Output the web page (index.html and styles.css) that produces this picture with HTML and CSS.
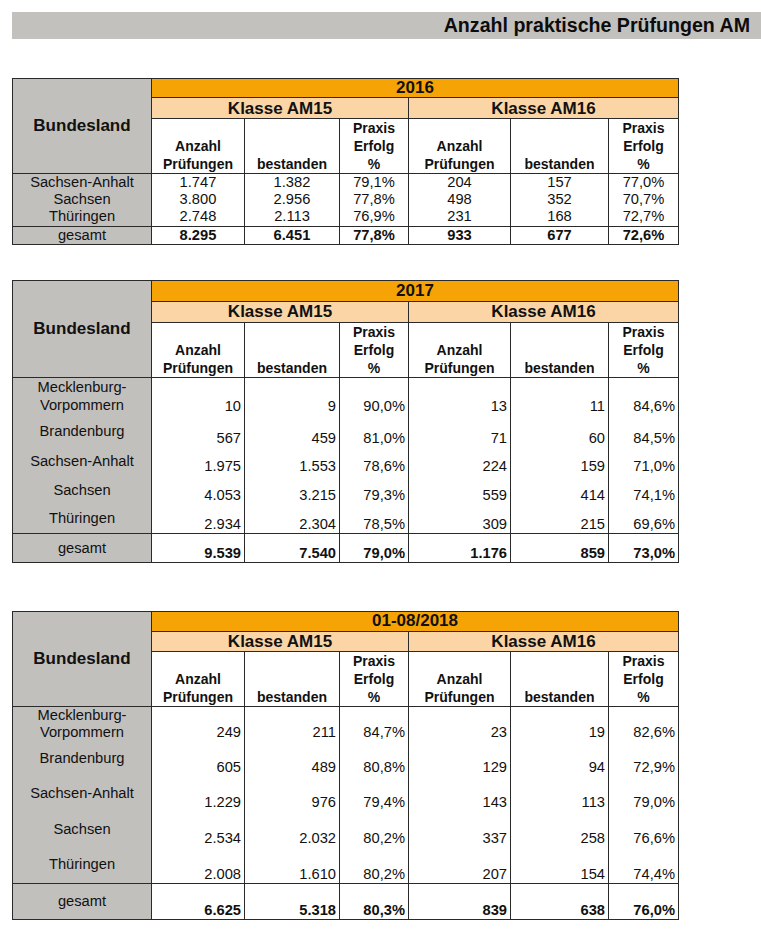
FILE: index.html
```html
<!DOCTYPE html>
<html lang="de">
<head>
<meta charset="utf-8">
<title>Anzahl praktische Prüfungen AM</title>
<link rel="stylesheet" href="styles.css">
</head>
<body>
<div class="title-bar">Anzahl praktische Prüfungen AM</div>

<table class="stats t1">
  <colgroup>
    <col class="c-land"><col class="c-a15"><col class="c-b15"><col class="c-p15"><col class="c-a16"><col class="c-b16"><col class="c-p16">
  </colgroup>
  <tr class="r-year">
    <th class="land-head" rowspan="3">Bundesland</th>
    <th class="year" colspan="6">2016</th>
  </tr>
  <tr class="r-klasse">
    <th class="klasse" colspan="3">Klasse AM15</th>
    <th class="klasse" colspan="3">Klasse AM16</th>
  </tr>
  <tr class="r-head">
    <th class="col-head">Anzahl<br>Prüfungen</th>
    <th class="col-head">bestanden</th>
    <th class="col-head">Praxis<br>Erfolg<br>%</th>
    <th class="col-head">Anzahl<br>Prüfungen</th>
    <th class="col-head">bestanden</th>
    <th class="col-head">Praxis<br>Erfolg<br>%</th>
  </tr>
  <tr class="r-d1">
    <td class="land">Sachsen-Anhalt</td><td>1.747</td><td>1.382</td><td>79,1%</td><td>204</td><td>157</td><td>77,0%</td>
  </tr>
  <tr class="r-d2">
    <td class="land">Sachsen</td><td>3.800</td><td>2.956</td><td>77,8%</td><td>498</td><td>352</td><td>70,7%</td>
  </tr>
  <tr class="r-d3">
    <td class="land">Thüringen</td><td>2.748</td><td>2.113</td><td>76,9%</td><td>231</td><td>168</td><td>72,7%</td>
  </tr>
  <tr class="total">
    <td class="land">gesamt</td><td>8.295</td><td>6.451</td><td>77,8%</td><td>933</td><td>677</td><td>72,6%</td>
  </tr>
</table>

<table class="stats t2 wide">
  <colgroup>
    <col class="c-land"><col class="c-a15"><col class="c-b15"><col class="c-p15"><col class="c-a16"><col class="c-b16"><col class="c-p16">
  </colgroup>
  <tr class="r-year">
    <th class="land-head" rowspan="3">Bundesland</th>
    <th class="year" colspan="6">2017</th>
  </tr>
  <tr class="r-klasse">
    <th class="klasse" colspan="3">Klasse AM15</th>
    <th class="klasse" colspan="3">Klasse AM16</th>
  </tr>
  <tr class="r-head">
    <th class="col-head">Anzahl<br>Prüfungen</th>
    <th class="col-head">bestanden</th>
    <th class="col-head">Praxis<br>Erfolg<br>%</th>
    <th class="col-head">Anzahl<br>Prüfungen</th>
    <th class="col-head">bestanden</th>
    <th class="col-head">Praxis<br>Erfolg<br>%</th>
  </tr>
  <tr class="r-d1">
    <td class="land">Mecklenburg-<br>Vorpommern</td><td>10</td><td>9</td><td>90,0%</td><td>13</td><td>11</td><td>84,6%</td>
  </tr>
  <tr class="r-d2">
    <td class="land">Brandenburg</td><td>567</td><td>459</td><td>81,0%</td><td>71</td><td>60</td><td>84,5%</td>
  </tr>
  <tr class="r-d3">
    <td class="land">Sachsen-Anhalt</td><td>1.975</td><td>1.553</td><td>78,6%</td><td>224</td><td>159</td><td>71,0%</td>
  </tr>
  <tr class="r-d4">
    <td class="land">Sachsen</td><td>4.053</td><td>3.215</td><td>79,3%</td><td>559</td><td>414</td><td>74,1%</td>
  </tr>
  <tr class="r-d5">
    <td class="land">Thüringen</td><td>2.934</td><td>2.304</td><td>78,5%</td><td>309</td><td>215</td><td>69,6%</td>
  </tr>
  <tr class="total">
    <td class="land">gesamt</td><td>9.539</td><td>7.540</td><td>79,0%</td><td>1.176</td><td>859</td><td>73,0%</td>
  </tr>
</table>

<table class="stats t3 wide">
  <colgroup>
    <col class="c-land"><col class="c-a15"><col class="c-b15"><col class="c-p15"><col class="c-a16"><col class="c-b16"><col class="c-p16">
  </colgroup>
  <tr class="r-year">
    <th class="land-head" rowspan="3">Bundesland</th>
    <th class="year" colspan="6">01-08/2018</th>
  </tr>
  <tr class="r-klasse">
    <th class="klasse" colspan="3">Klasse AM15</th>
    <th class="klasse" colspan="3">Klasse AM16</th>
  </tr>
  <tr class="r-head">
    <th class="col-head">Anzahl<br>Prüfungen</th>
    <th class="col-head">bestanden</th>
    <th class="col-head">Praxis<br>Erfolg<br>%</th>
    <th class="col-head">Anzahl<br>Prüfungen</th>
    <th class="col-head">bestanden</th>
    <th class="col-head">Praxis<br>Erfolg<br>%</th>
  </tr>
  <tr class="r-d1">
    <td class="land">Mecklenburg-<br>Vorpommern</td><td>249</td><td>211</td><td>84,7%</td><td>23</td><td>19</td><td>82,6%</td>
  </tr>
  <tr class="r-d2">
    <td class="land">Brandenburg</td><td>605</td><td>489</td><td>80,8%</td><td>129</td><td>94</td><td>72,9%</td>
  </tr>
  <tr class="r-d3">
    <td class="land">Sachsen-Anhalt</td><td>1.229</td><td>976</td><td>79,4%</td><td>143</td><td>113</td><td>79,0%</td>
  </tr>
  <tr class="r-d4">
    <td class="land">Sachsen</td><td>2.534</td><td>2.032</td><td>80,2%</td><td>337</td><td>258</td><td>76,6%</td>
  </tr>
  <tr class="r-d5">
    <td class="land">Thüringen</td><td>2.008</td><td>1.610</td><td>80,2%</td><td>207</td><td>154</td><td>74,4%</td>
  </tr>
  <tr class="total">
    <td class="land">gesamt</td><td>6.625</td><td>5.318</td><td>80,3%</td><td>839</td><td>638</td><td>76,0%</td>
  </tr>
</table>
</body>
</html>
```

FILE: styles.css
```css
html, body {
  margin: 0;
  padding: 0;
  background: #ffffff;
}

body {
  font-family: "Liberation Sans", Arial, Helvetica, sans-serif;
  color: #111;
  padding-top: 12px;
}

.title-bar {
  margin-left: 12px;
  height: 27px;
  line-height: 27px;
  background: #c3c1be;
  text-align: right;
  padding-right: 11px;
  font-weight: bold;
  font-size: 19.6px;
  color: #0c0c0c;
}

.stats {
  border-collapse: collapse;
  table-layout: fixed;
  margin-left: 12px;
  border: 1px solid #2a2a2a;
}

.t1 { margin-top: 39px; }
.t2 { margin-top: 35px; }
.t3 { margin-top: 48px; }

.c-land { width: 139px; }
.c-a15 { width: 93px; }
.c-b15 { width: 95px; }
.c-p15 { width: 69px; }
.c-a16 { width: 102px; }
.c-b16 { width: 98px; }
.c-p16 { width: 70px; }

.stats th,
.stats td {
  padding: 0 3px;
  border-left: 1px solid #2a2a2a;
  border-right: 1px solid #2a2a2a;
  text-align: center;
  white-space: nowrap;
}

.stats th {
  font-weight: bold;
}

.land-head {
  background: #c2c0bd;
  font-size: 17px;
  vertical-align: middle;
  padding-bottom: 2px;
  border-bottom: 1px solid #2a2a2a;
}

.year {
  background: #f6a405;
  font-size: 17px;
  line-height: 18px;
  border-bottom: 1px solid #2a2a2a;
}

.klasse {
  background: #fbd5a6;
  font-size: 17px;
  line-height: 19px;
  border-bottom: 1px solid #2a2a2a;
}

.col-head {
  font-size: 14px;
  line-height: 18px;
  vertical-align: bottom;
  background: #fff;
  border-bottom: 1px solid #2a2a2a;
}

.stats td {
  font-size: 14.7px;
  line-height: 17px;
  background: #fff;
}

.stats td.land {
  background: #c2c0bd;
  vertical-align: middle;
}

.total td {
  border-top: 1px solid #2a2a2a;
  font-weight: bold;
}

.total td.land {
  font-weight: normal;
}

/* row heights */
.t1 .r-year { height: 19px; }
.t1 .r-klasse { height: 21px; }
.t1 .r-head { height: 55px; }
.t1 .r-d1 { height: 17px; }
.t1 .r-d2 { height: 17px; }
.t1 .r-d3 { height: 18px; }
.t1 .total { height: 17px; }

.t1 td { vertical-align: middle; }

/* wider tables (2017, 2018): numbers right aligned at the bottom */
.wide td {
  text-align: right;
  vertical-align: bottom;
  line-height: 18px;
}

.wide td.land {
  text-align: center;
  vertical-align: middle;
}

.t3 td.land {
  line-height: 17px;
}

.t2 .r-year { height: 21px; }
.t2 .r-klasse { height: 21px; }
.t2 .r-head { height: 55px; }
.t2 .r-d1 { height: 38px; }
.t2 .r-d2 { height: 32px; }
.t2 .r-d3 { height: 28px; }
.t2 .r-d4 { height: 29px; }
.t2 .r-d5 { height: 29px; }
.t2 .total { height: 29px; }

.t3 .r-year { height: 20px; }
.t3 .r-klasse { height: 20px; }
.t3 .r-head { height: 55px; }
.t3 .r-d1 { height: 35px; }
.t3 .r-d2 { height: 35px; }
.t3 .r-d3 { height: 35px; }
.t3 .r-d4 { height: 36px; }
.t3 .r-d5 { height: 36px; }
.t3 .total { height: 36px; }
```
